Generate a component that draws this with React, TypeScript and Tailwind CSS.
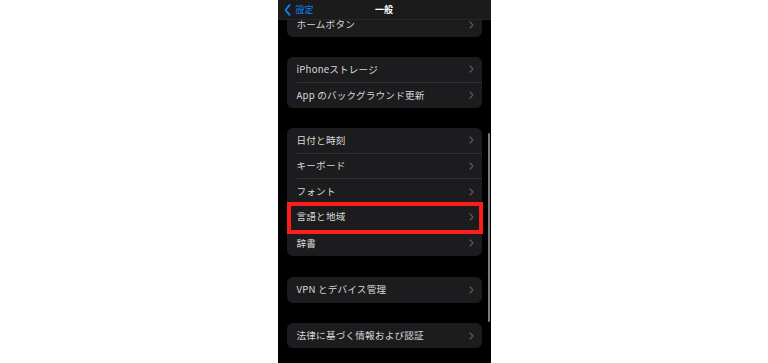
import React from 'react';

const font = { fontFamily: '"Noto Sans CJK JP", "Noto Sans", sans-serif' };

// 設定 > 一般 のリスト（先頭のグループはスクロールで上が隠れている）
const groups: string[][] = [
  ['iPhoneストレージ', 'App のバックグラウンド更新'],
  ['日付と時刻', 'キーボード', 'フォント', '言語と地域', '辞書'],
  ['VPN とデバイス管理'],
  ['法律に基づく情報および認証'],
];

function Chevron() {
  return (
    <svg width="5" height="8" viewBox="0 0 5 8" fill="none">
      <path d="M1 1l3 3-3 3" stroke="#5b5b5f" strokeWidth="1.2" strokeLinecap="round" strokeLinejoin="round" />
    </svg>
  );
}

function Row({ label, last }: { label: string; last: boolean }) {
  const highlighted = label === '言語と地域';
  return (
    <div className="relative h-[25.6px] flex pl-[10px]">
      <div
        className={
          'flex-1 flex items-center justify-between pr-[8px] ' +
          (last ? '' : 'border-b border-[#313133]')
        }
      >
        <span className="text-[9.6px] text-[#d9d9d9] tracking-[0.2px] leading-none">{label}</span>
        <Chevron />
      </div>
      {highlighted && (
        <div className="absolute -top-[3px] -bottom-[3px] left-0 -right-[1px] border-[4px] border-[#ff1c1c]" />
      )}
    </div>
  );
}

export default function App() {
  return (
    <div className="w-[768px] h-[363px] bg-white flex justify-center" style={font}>
      <div className="relative w-[213px] h-[363px] bg-black flex flex-col overflow-hidden">
        {/* ナビゲーションバー */}
        <div className="h-[20px] bg-[#1b1b1b] border-b border-[#262626] grid grid-cols-[1fr_auto_1fr] items-center">
          <div className="flex items-center gap-[5px] pl-[6px]">
            <svg width="7" height="12" viewBox="0 0 7 12" fill="none">
              <path d="M5.5 1.2L1.5 6l4 4.8" stroke="#0a84ff" strokeWidth="1.8" strokeLinecap="round" strokeLinejoin="round" />
            </svg>
            <span className="text-[9px] text-[#0a84ff] leading-none">設定</span>
          </div>
          <span className="text-[9px] font-bold text-white leading-none">一般</span>
          <div />
        </div>

        <div className="flex-1 overflow-hidden px-[9px]">
          {/* ホームボタン（上半分はバーの下） */}
          <div className="h-[17px] bg-[#1c1c1e] rounded-b-[6px] flex items-start justify-between pl-[10px] pr-[8px] pt-[0px]">
            <span className="text-[9.6px] text-[#d9d9d9] tracking-[0.2px] leading-none">ホームボタン</span>
            <div className="pt-[1px]">
              <Chevron />
            </div>
          </div>
          <div className="flex flex-col">
            {groups.map((g, i) => (
              <div key={i} className={'bg-[#1c1c1e] rounded-[6px] ' + (i === 2 ? 'mt-[21px]' : 'mt-[20px]')}>
                {g.map((label, j) => (
                  <Row key={label} label={label} last={j === g.length - 1} />
                ))}
              </div>
            ))}
          </div>
        </div>

        {/* スクロールバー */}
        <div className="absolute right-[1px] top-[133px] h-[189px] w-[2px] rounded-full bg-[#7c7c7c]" />
      </div>
    </div>
  );
}
